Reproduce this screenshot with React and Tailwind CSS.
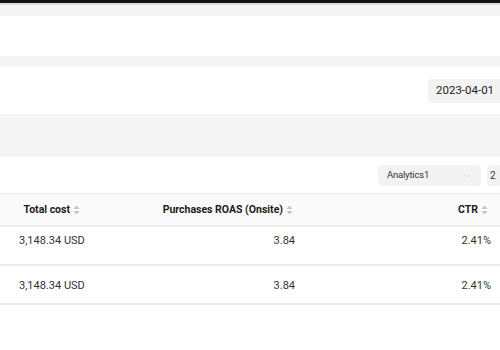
import { ChevronDown } from 'lucide-react'

function SortIcon() {
  return (
    <svg width="7" height="10" viewBox="0 0 7 10" className="ml-[3px] inline-block shrink-0">
      <path d="M3.5 0.5 L6.5 4 L0.5 4 Z" fill="#c4c4c4" />
      <path d="M3.5 9.5 L6.5 6 L0.5 6 Z" fill="#c4c4c4" />
    </svg>
  )
}

const rows = [
  { cost: '3,148.34 USD', roas: '3.84', ctr: '2.41%', pad: 'pt-[6px]' },
  { cost: '3,148.34 USD', roas: '3.84', ctr: '2.41%', pad: 'pt-[12px]' },
]

export default function App() {
  return (
    <div className="w-[500px] h-[350px] overflow-hidden bg-white text-[#262626] whitespace-nowrap" style={{ fontFamily: 'Roboto, "Noto Sans", sans-serif' }}>
      {/* Top bar */}
      <div className="h-[3px] bg-[#141414]" />
      <div className="h-[2px] bg-[#dcdcdc]" />
      <div className="h-[11px] bg-[#f5f5f5]" />

      {/* Blank panel */}
      <div className="h-[40px] bg-white" />
      <div className="h-[11px] bg-[#f5f5f5]" />

      {/* Date panel */}
      <div className="h-[47px] bg-white flex items-center justify-end">
        <div className="h-[24px] w-[72px] bg-[#f3f3f3] rounded-l-[4px] flex items-center pl-[8px] text-[11.5px] text-[#222]">
          2023-04-01
        </div>
      </div>
      <div className="h-[43px] bg-[#f5f5f5]" />

      {/* Filters */}
      <div className="h-[36px] bg-white flex items-center justify-end gap-[6px]">
        <div className="h-[21px] w-[103px] bg-[#f3f3f3] rounded-[4px] flex items-center justify-between pl-[9px] pr-[8px]">
          <span className="text-[9.5px] tracking-[-0.2px] text-[#333]">Analytics1</span>
          <ChevronDown size={11} strokeWidth={1.2} color="#c8c8c8" />
        </div>
        <div className="h-[21px] w-[13px] bg-[#f3f3f3] rounded-l-[4px] flex items-center pl-[3px] text-[10px] text-[#333]">
          2
        </div>
      </div>

      {/* Table */}
      <div className="border-t border-[#ececec]">
        <div className="grid grid-cols-[92px_213px_1fr] h-[33px] bg-[#fafafa] border-b-2 border-[#ececec] text-[10.5px] font-bold text-[#1a1a1a]">
          <div className="flex items-center justify-end pr-[12px]">
            Total cost<SortIcon />
          </div>
          <div className="flex items-center justify-end pr-[12px]">
            Purchases ROAS (Onsite)<SortIcon />
          </div>
          <div className="flex items-center justify-end pr-[12px]">
            CTR<SortIcon />
          </div>
        </div>
        {rows.map((r, i) => (
          <div
            key={i}
            className={`grid grid-cols-[92px_213px_1fr] h-[39px] border-b-2 border-[#ececec] text-[11px] text-[#333] ${r.pad}`}
          >
            <div className="pl-[19px]">{r.cost}</div>
            <div className="text-right pr-[10px]">{r.roas}</div>
            <div className="text-right pr-[9px]">{r.ctr}</div>
          </div>
        ))}
      </div>
    </div>
  )
}
